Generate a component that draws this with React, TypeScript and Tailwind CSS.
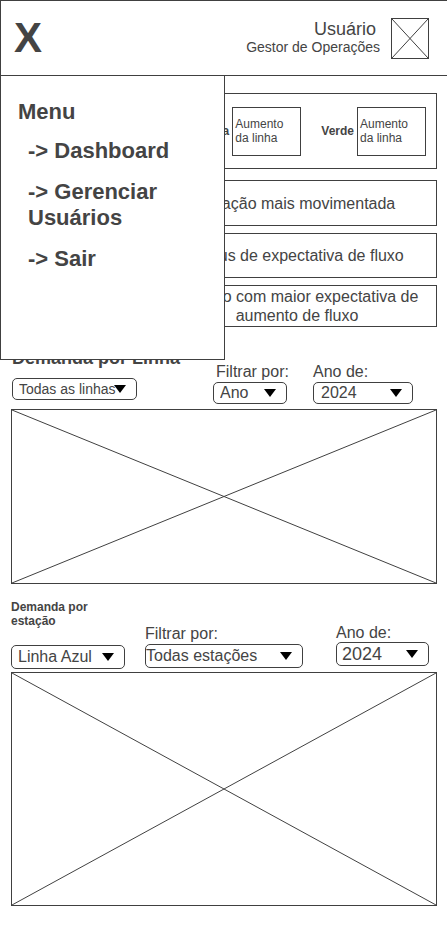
import { useId, type ReactNode } from "react";

type PlaceholderProps = { className: string; label: string };

function Placeholder({ className, label }: PlaceholderProps) {
  return (
    <div role="img" aria-label={label} className={`border border-[#404040] ${className}`}>
      <svg className="block h-full w-full" viewBox="0 0 100 100" preserveAspectRatio="none" aria-hidden="true">
        <path d="M0 0L100 100M100 0L0 100" stroke="#404040" strokeWidth="1" vectorEffect="non-scaling-stroke" fill="none" />
      </svg>
    </div>
  );
}

type PickerProps = {
  label: string;
  heading?: string;
  options: string[];
  className: string;
  selectClass: string;
  labelClass?: string;
};

function Picker({ label, heading, options, className, selectClass, labelClass = "" }: PickerProps) {
  const id = useId();
  const caption: ReactNode = heading ? (
    <h2 className={`font-bold ${heading}`}>
      <label htmlFor={id} className="block">{label}</label>
    </h2>
  ) : (
    <label htmlFor={id} className={`block text-base leading-[18px] whitespace-nowrap ${labelClass}`}>
      {label}
    </label>
  );
  return (
    <div className={className}>
      {caption}
      <div className="relative">
        <select
          id={id}
          className={`block w-full appearance-none rounded-[5px] border border-[#404040] bg-white ${selectClass}`}
        >
          {options.map((option) => (
            <option key={option}>{option}</option>
          ))}
        </select>
        <svg
          className="pointer-events-none absolute inset-y-0 right-[11px] my-auto h-2 w-3"
          viewBox="0 0 12 8"
          aria-hidden="true"
        >
          <path d="M0 0H12L6 8Z" fill="black" />
        </svg>
      </div>
    </div>
  );
}

function LineStatus({ name }: { name: string }) {
  return (
    <div className="flex items-center gap-[3px] text-xs leading-[14px]">
      <span className="font-bold">{name}</span>
      <p className="flex h-[49px] w-[69px] items-center border border-[#404040] px-0.5">
        Aumento da linha
      </p>
    </div>
  );
}

function SummaryCard({ text, className }: { text: string; className: string }) {
  return (
    <section
      className={`flex items-center border border-[#404040] pr-2.5 pl-[156px] text-center leading-[19px] ${className}`}
    >
      <p className="grow">{text}</p>
    </section>
  );
}

export default function App() {
  return (
    <div className="relative min-h-screen bg-white font-['Liberation_Sans',Arial,sans-serif] text-[#444]">
      <header className="flex h-[76px] items-center justify-between border-t border-b border-l border-[#404040] pr-[18px] pl-[13px]">
        <button type="button" aria-label="Fechar menu" className="text-[42px] leading-none font-bold">
          X
        </button>
        <div className="flex items-center gap-[11px]">
          <div className="pb-0.5 text-right">
            <p className="pr-1 text-lg leading-5">Usuário</p>
            <p className="text-sm leading-4">Gestor de Operações</p>
          </div>
          <Placeholder label="Foto do usuário" className="h-[41px] w-[38px]" />
        </div>
      </header>

      <nav
        aria-label="Menu"
        className="absolute top-[75px] left-0 z-10 h-[285px] w-[225px] border border-[#404040] bg-white px-[17px] pt-[23px] text-[22px] leading-[26px] font-bold"
      >
        <h2>Menu</h2>
        <ul className="mt-[13px] flex flex-col gap-[15px] pl-2.5">
          <li><a href="#dashboard">-&gt; Dashboard</a></li>
          <li><a href="#usuarios">-&gt; Gerenciar Usuários</a></li>
          <li><a href="#sair">-&gt; Sair</a></li>
        </ul>
      </nav>

      <main className="pt-[17px] pr-2.5 pb-5 pl-[11px]">
        <section className="flex h-[76px] items-center justify-end gap-5 border border-[#404040] pr-2.5">
          <LineStatus name="Vermelha" />
          <LineStatus name="Verde" />
        </section>

        <div className="mt-[11px] flex flex-col gap-[7px]">
          <SummaryCard text="Estação mais movimentada" className="min-h-[46px]" />
          <SummaryCard text="Status de expectativa de fluxo" className="min-h-[45px]" />
          <SummaryCard text="Período com maior expectativa de aumento de fluxo" className="min-h-[42px]" />
        </div>

        <section className="mt-[21px]">
          <div className="flex items-end">
            <div className="w-[202px] pb-1 pl-px">
              <Picker
                label="Demanda por Linha"
                heading="mb-2.5 text-lg leading-5 whitespace-nowrap"
                options={["Todas as linhas", "Azul", "Vermelha", "Verde"]}
                className="w-[125px]"
                selectClass="h-[22px] pl-1.5 text-sm leading-5"
              />
            </div>
            <Picker
              label="Filtrar por:"
              options={["Ano", "Mês"]}
              className="w-[74px]"
              labelClass="mb-px pl-[3px]"
              selectClass="h-[22px] pl-1.5 text-base leading-5"
            />
            <Picker
              label="Ano de:"
              options={["2024", "2023"]}
              className="ml-[26px] w-[100px]"
              labelClass="mb-px"
              selectClass="h-[22px] pl-[7px] text-base leading-5"
            />
          </div>
          <Placeholder label="Gráfico de demanda por linha" className="mt-[5px] h-[175px]" />
        </section>

        <section className="mt-4">
          <div className="flex items-end">
            <div className="w-[134px]">
              <Picker
                label="Demanda por estação"
                heading="mb-[17px] w-24 text-xs leading-[14px]"
                options={["Linha Azul", "Linha Vermelha", "Linha Verde"]}
                className="w-[114px]"
                selectClass="h-6 pl-1.5 text-base leading-[22px]"
              />
            </div>
            <Picker
              label="Filtrar por:"
              options={["Todas estações"]}
              className="mb-px w-[158px]"
              labelClass="mb-px"
              selectClass="h-6 text-base leading-[22px]"
            />
            <Picker
              label="Ano de:"
              options={["2024", "2023"]}
              className="mb-[3px] ml-[33px] w-[93px]"
              selectClass="h-6 pl-[5px] text-lg leading-[22px]"
            />
          </div>
          <Placeholder label="Gráfico de demanda por estação" className="mt-[3px] h-[234px]" />
        </section>
      </main>
    </div>
  );
}
